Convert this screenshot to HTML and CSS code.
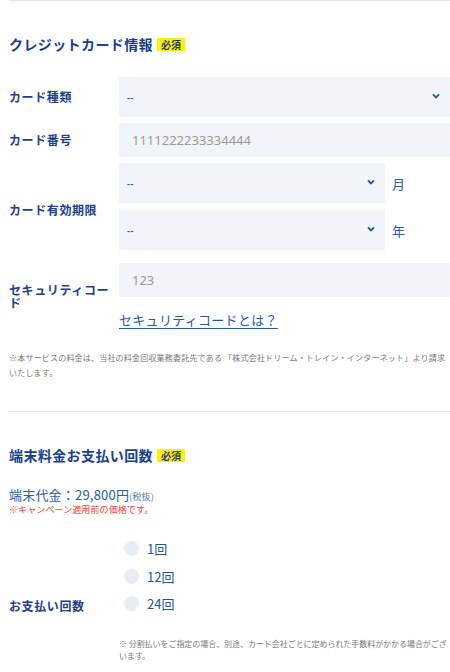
FILE: index.html
```html
<!DOCTYPE html>
<html lang="ja">
<head>
<meta charset="utf-8">
<title>お支払い情報</title>
<link rel="stylesheet" href="styles.css">
</head>
<body>
<div class="page">
  <div class="divider divider-top"></div>

  <section class="section">
    <h2 class="title">クレジットカード情報<span class="badge">必須</span></h2>

    <div class="form">
      <div class="row row-first">
        <div class="label">カード種類</div>
        <div class="field">
          <div class="select select-full">
            <span class="val">--</span>
            <svg class="chev" width="8" height="6" viewBox="0 0 8 6"><path d="M1 1.3 L4 4.3 L7 1.3" fill="none" stroke="#2557a7" stroke-width="1.9"/></svg>
          </div>
        </div>
      </div>

      <div class="row row-next">
        <div class="label">カード番号</div>
        <div class="field">
          <div class="input"><span class="ph">1111222233334444</span></div>
        </div>
      </div>

      <div class="row row-next">
        <div class="label label-exp">カード有効期限</div>
        <div class="field field-exp">
          <div class="exp-line">
            <div class="select select-half">
              <span class="val">--</span>
              <svg class="chev" width="8" height="6" viewBox="0 0 8 6"><path d="M1 1.3 L4 4.3 L7 1.3" fill="none" stroke="#2557a7" stroke-width="1.9"/></svg>
            </div>
            <span class="unit">月</span>
          </div>
          <div class="exp-line">
            <div class="select select-half">
              <span class="val">--</span>
              <svg class="chev" width="8" height="6" viewBox="0 0 8 6"><path d="M1 1.3 L4 4.3 L7 1.3" fill="none" stroke="#2557a7" stroke-width="1.9"/></svg>
            </div>
            <span class="unit">年</span>
          </div>
        </div>
      </div>

      <div class="row row-sec">
        <div class="label label-sec">セキュリティコード</div>
        <div class="field">
          <div class="input"><span class="ph">123</span></div>
          <a class="link" href="#">セキュリティコードとは？</a>
        </div>
      </div>
    </div>

    <p class="note note-main">※本サービスの料金は、当社の料金回収業務委託先である 「株式会社ドリーム・トレイン・インターネット」より請求いたします。</p>
  </section>

  <div class="divider divider-mid"></div>

  <section class="section">
    <h2 class="title">端末料金お支払い回数<span class="badge">必須</span></h2>

    <p class="price">端末代金：29,800円<span class="tax">(税抜)</span></p>
    <p class="campaign">※キャンペーン適用前の価格です。</p>

    <div class="pay">
      <div class="label label-pay">お支払い回数</div>
      <div class="radios">
        <div class="radio"><span class="dot"></span><span class="rtext">1回</span></div>
        <div class="radio"><span class="dot"></span><span class="rtext">12回</span></div>
        <div class="radio"><span class="dot"></span><span class="rtext">24回</span></div>
      </div>
      <p class="note note-pay">※ 分割払いをご指定の場合、別途、カード会社ごとに定められた手数料がかかる場合がございます。</p>
    </div>
  </section>
</div>
</body>
</html>
```

FILE: styles.css
```css
* {
  box-sizing: border-box;
}

html, body {
  margin: 0;
  padding: 0;
  background: #ffffff;
}

body {
  font-family: "Noto Sans CJK JP", "Noto Sans", sans-serif;
  color: #1c4190;
}

.page {
  padding-left: 9px;
  width: 450px;
}

.divider {
  height: 1px;
  background: #e3e8f0;
}

.divider-mid {
  margin-top: 31px;
}

.title {
  margin: 33px 0 0;
  font-size: 14px;
  line-height: 20px;
  font-weight: 700;
  letter-spacing: 0.4px;
  color: #17408f;
  display: flex;
  align-items: center;
}

.badge {
  display: inline-block;
  margin-left: 4px;
  background: #fff100;
  color: #1b3b82;
  font-size: 10px;
  font-weight: 700;
  line-height: 13px;
  padding: 0 4px;
  letter-spacing: 0;
}

.form {
  margin-top: 23px;
}

.row {
  display: grid;
  grid-template-columns: 110px 1fr;
  align-items: center;
}

.row-next {
  margin-top: 6px;
}

.row-sec {
  margin-top: 13px;
}

.label {
  font-size: 12px;
  line-height: 12.5px;
  font-weight: 700;
  letter-spacing: 0.6px;
  color: #1b3f8c;
}

.label-exp {
  padding-top: 7px;
}

.label-sec {
  padding-right: 2px;
}

.select {
  height: 40px;
  background: #f1f4f9;
  display: flex;
  align-items: center;
  justify-content: space-between;
  padding: 0 10px 0 8px;
}

.select-half {
  width: 266px;
}

.val {
  font-family: "Noto Sans", sans-serif;
  font-size: 9px;
  color: #2557a7;
  font-weight: 700;
  letter-spacing: 0.5px;
  padding-top: 1px;
}

.chev {
  display: block;
  margin-top: -2px;
}

.input {
  height: 34px;
  background: #f1f4f9;
  display: flex;
  align-items: center;
  padding-left: 13px;
}

.ph {
  font-family: "Noto Sans", sans-serif;
  font-size: 13px;
  color: #9a9a9a;
}

.field-exp {
  display: flex;
  flex-direction: column;
  gap: 7px;
}

.exp-line {
  display: flex;
  align-items: center;
  gap: 7px;
}

.unit {
  font-size: 13px;
  color: #2b5aa8;
}

.link {
  display: inline-block;
  margin-top: 13px;
  font-size: 13px;
  line-height: 20px;
  letter-spacing: 0.3px;
  color: #2259b0;
  text-decoration: underline;
  text-underline-offset: 3px;
}

.note {
  margin: 0;
  font-size: 8px;
  letter-spacing: 0.2px;
  color: #777777;
}

.note-main {
  margin-top: 20px;
  line-height: 15px;
}

.price {
  margin: 23px 0 0;
  font-size: 13px;
  line-height: 14px;
  color: #2b5aa8;
  letter-spacing: 0.2px;
}

.tax {
  font-size: 9px;
  color: #5a7bb3;
}

.campaign {
  margin: 0;
  font-size: 9px;
  line-height: 12px;
  color: #f5422c;
  letter-spacing: 0.1px;
}

.pay {
  margin-top: 19px;
  display: grid;
  grid-template-columns: 110px 1fr;
}

.label-pay {
  align-self: end;
  line-height: 24px;
}

.radios {
  padding-left: 5px;
}

.radio {
  height: 27.5px;
  display: flex;
  align-items: center;
  gap: 8px;
}

.dot {
  width: 15px;
  height: 15px;
  border-radius: 50%;
  background: #e7ecf5;
}

.rtext {
  font-size: 13px;
  color: #2354a6;
}

.note-pay {
  grid-column: 2;
  margin-top: 20px;
  line-height: 12.5px;
  letter-spacing: -0.05px;
}
```
